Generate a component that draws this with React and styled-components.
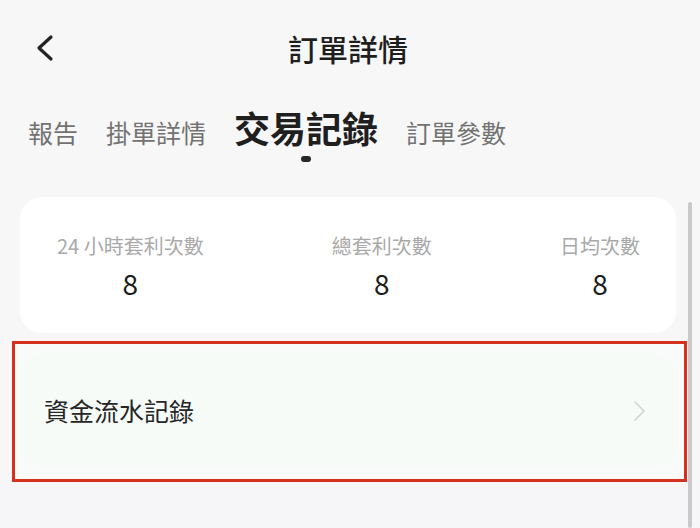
import React from 'react'
import styled, { createGlobalStyle } from 'styled-components'

const GlobalStyle = createGlobalStyle`
    html, body {
        margin: 0;
        padding: 0;
        background: #f7f7f7;
    }

    body {
        font-family: "Noto Sans CJK TC", "Noto Sans", sans-serif;
        color: #1f1f1f;
    }
`

const Page = styled.div`
    position: relative;
    width: 700px;
    height: 528px;
    overflow: hidden;
    background: linear-gradient(#f7f7f7 0, #f7f7f7 480px, #f6f6f8 480px);
`

const Header = styled.header`
    height: 96px;
    display: grid;
    grid-template-columns: 1fr auto 1fr;
    align-items: center;
    padding-right: 4px;
`

const BackButton = styled.button`
    justify-self: start;
    margin-left: 34px;
    padding: 0;
    border: none;
    background: none;
    display: flex;
    color: #222222;
`

const Title = styled.h1`
    margin: 0;
    font-size: 30px;
    line-height: 1;
    font-weight: 500;
    color: #1e1e1e;
`

const Tabs = styled.nav`
    box-sizing: border-box;
    height: 101px;
    padding: 13px 0 0 28px;
    display: flex;
    align-items: baseline;
    gap: 28px;
`

const Tab = styled.span`
    position: relative;
    line-height: 1;
    font-size: ${p => p.$active ? '36px' : '25px'};
    font-weight: ${p => p.$active ? 700 : 400};
    color: ${p => p.$active ? '#1f1f1f' : '#727272'};

    &::after {
        content: '';
        display: ${p => p.$active ? 'block' : 'none'};
        position: absolute;
        left: 50%;
        top: 47px;
        width: 10px;
        height: 6px;
        border-radius: 3px;
        background: #262626;
        transform: translateX(-50%);
    }
`

const StatsCard = styled.section`
    box-sizing: border-box;
    height: 136px;
    margin: 0 24px 0 20px;
    padding: 39px 36px 0 37px;
    border-radius: 22px;
    background: #ffffff;
    display: flex;
    justify-content: space-between;
`

const Stat = styled.div`
    display: flex;
    flex-direction: column;
    align-items: center;
`

const StatLabel = styled.span`
    font-size: 20px;
    line-height: 1;
    color: #a9a9a9;
`

const StatValue = styled.span`
    margin-top: 13px;
    font-size: 28px;
    line-height: 1;
    color: #1d1d1d;
`

const Highlight = styled.div`
    box-sizing: border-box;
    width: 675px;
    height: 141px;
    margin: 8px 0 0 12px;
    padding: 10px 8px 12px 5px;
    border: 3px solid #d6301f;
    background: #f9fafa;
`

const LinkRow = styled.a`
    box-sizing: border-box;
    height: 100%;
    padding: 0 30px 0 24px;
    border-radius: 20px;
    background: #f6fbf8;
    display: flex;
    align-items: center;
    justify-content: space-between;
    font-size: 25px;
    line-height: 1;
    color: #262626;
    text-decoration: none;
`

const ScrollThumb = styled.div`
    position: absolute;
    left: 688px;
    top: 202px;
    bottom: 0;
    width: 4px;
    border-radius: 2px;
    background: #c9c9c9;
`

const tabs = ['報告', '掛單詳情', '交易記錄', '訂單參數']

const stats = [
    { label: '24 小時套利次數', value: 8 },
    { label: '總套利次數', value: 8 },
    { label: '日均次數', value: 8 },
]

export default function App() {
    return (
        <Page>
            <GlobalStyle />
            <Header>
                <BackButton aria-label='返回'>
                    <svg width='22' height='28' viewBox='0 0 22 28'>
                        <polyline
                            points='17,3 5,14 17,25'
                            fill='none'
                            stroke='currentColor'
                            strokeWidth='3.2'
                            strokeLinecap='round'
                            strokeLinejoin='round'
                        />
                    </svg>
                </BackButton>
                <Title>訂單詳情</Title>
            </Header>

            <Tabs>
                {tabs.map(t => (
                    <Tab key={t} $active={t === '交易記錄'}>{t}</Tab>
                ))}
            </Tabs>

            <StatsCard>
                {stats.map(s => (
                    <Stat key={s.label}>
                        <StatLabel>{s.label}</StatLabel>
                        <StatValue>{s.value}</StatValue>
                    </Stat>
                ))}
            </StatsCard>

            <Highlight>
                <LinkRow href='#'>
                    資金流水記錄
                    <svg width='14' height='22' viewBox='0 0 14 22'>
                        <polyline
                            points='3,2 12,11 3,20'
                            fill='none'
                            stroke='#d2d2d2'
                            strokeWidth='1.6'
                            strokeLinecap='round'
                            strokeLinejoin='round'
                        />
                    </svg>
                </LinkRow>
            </Highlight>

            <ScrollThumb />
        </Page>
    )
}
